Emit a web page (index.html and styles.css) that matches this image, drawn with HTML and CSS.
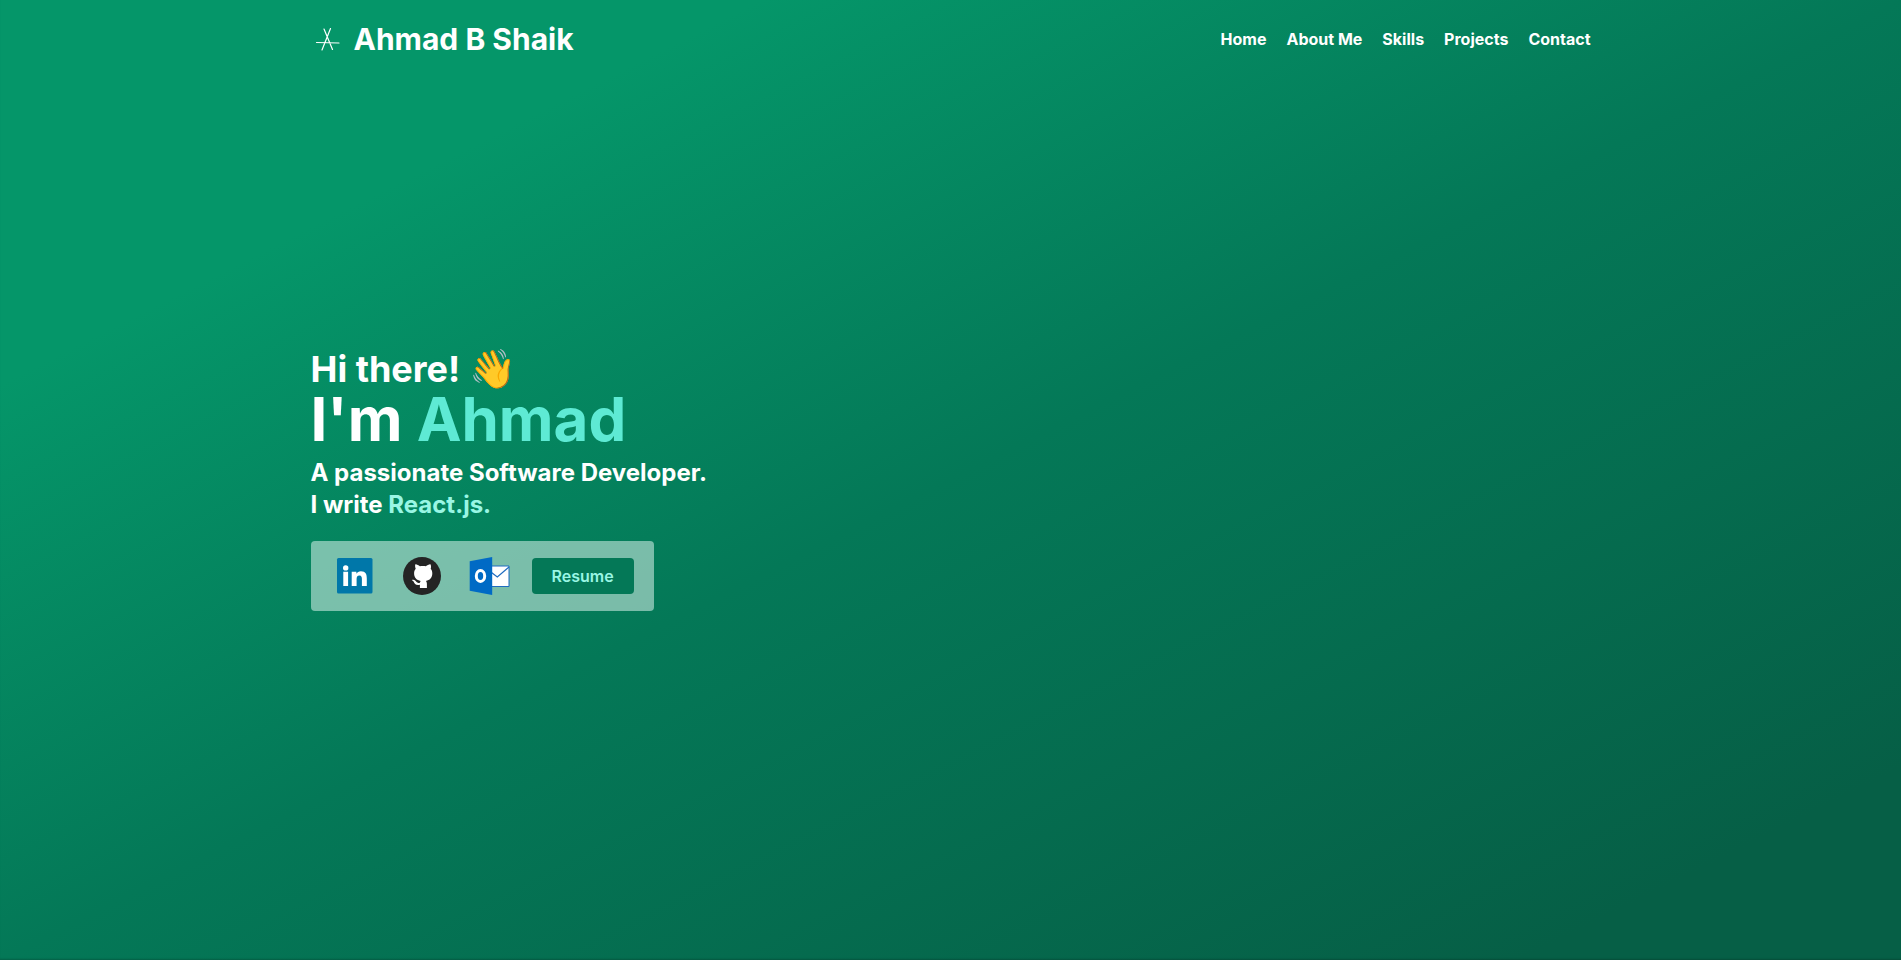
FILE: index.html
```
<!DOCTYPE html>
<html lang="en">
<head>
<meta charset="utf-8">
<meta name="viewport" content="width=device-width, initial-scale=1">
<title>Ahmad B Shaik</title>
<link rel="stylesheet" href="styles.css">
</head>
<body>
<header class="site-header">
  <div class="container header-row">
    <a class="brand" href="#home">
      <svg class="brand-mark" viewBox="0 0 32 32" fill="none" stroke="#fff" stroke-width="1.2" stroke-linecap="round" aria-hidden="true">
        <path d="M13 6 21.500 26.500M19.500 5.500 11 27M5.500 19.500 28 20"/>
      </svg>
      <span class="brand-name">Ahmad B Shaik</span>
    </a>
    <nav class="nav">
      <a href="#home">Home</a>
      <a href="#about">About Me</a>
      <a href="#skills">Skills</a>
      <a href="#projects">Projects</a>
      <a href="#contact">Contact</a>
    </nav>
  </div>
</header>
<main class="hero" id="home">
  <div class="container intro">
    <h2 class="greeting">Hi there! <span class="wave">👋</span></h2>
    <h1 class="name">I'm <span class="name-accent">Ahmad</span></h1>
    <p class="tagline">A passionate Software Developer.<br>I write <span class="tagline-accent">React.js.</span></p>
    <div class="links">
      <a class="social" href="#linkedin" aria-label="LinkedIn">
        <svg viewBox="1 1 46 46" aria-hidden="true">
          <rect x="6.500" y="6" width="35.500" height="35.500" rx="1.500" fill="#0077a9"/>
          <circle cx="15.200" cy="15.900" r="2.700" fill="#fff"/>
          <path fill="#fff" d="M12.800 19.800h4.800V34h-4.800zM21.200 19.800h4.700v1.900c.9-1.500 2.400-2.400 4.500-2.400 4.800 0 5.900 3 5.900 7.200V34h-4.900v-6.700c0-1.900-.3-3.700-2.500-3.700s-2.800 1.700-2.800 3.700V34h-4.900z"/>
        </svg>
      </a>
      <a class="social" href="#github" aria-label="GitHub">
        <svg viewBox="1 1 46 46" aria-hidden="true">
          <circle cx="24.500" cy="24" r="19" fill="#242424"/>
          <path fill="#fff" transform="translate(.4 0)" d="M17.500 12.300c.5-.5 3.200.7 4.500 1.900 1.500-.3 4.500-.3 6 0 1.300-1.200 4-2.400 4.500-1.900.8 1.200.8 3.200.3 4.500 1.100 1.200 1.600 2.700 1.600 4.500 0 4.700-2.500 7-6.400 7.600.7.800 1 1.700 1 3V36h-7v-3.200c-4.500.8-5.300-1.400-6.100-2.800-.5-.9-1.500-1.400-2-1.900 2.200-1 3.700.5 4.500 1.700.9 1.100 1.900 1.400 3.600.9.200-.7.400-1.300.8-1.800-3.900-.6-6.600-2.900-6.600-7.600 0-1.800.6-3.300 1.600-4.500-.5-1.300-.9-3.300-.3-4.500z"/>
        </svg>
      </a>
      <a class="social" href="#email" aria-label="Email">
        <svg viewBox="1 1 46 46" aria-hidden="true">
          <path fill="#fff" stroke="#1f6cc0" d="M27 14h17.500v20.500H27z"/>
          <path fill="none" stroke="#1f6cc0" stroke-width="1.200" d="m27 20.500 5.800 4.500L44.500 15"/>
          <path fill="#006ac5" d="M5.200 9.200 27.700 5v38L5.200 38.800z"/>
          <ellipse cx="16" cy="24" rx="4.200" ry="5.400" fill="none" stroke="#fff" stroke-width="3"/>
        </svg>
      </a>
      <a class="resume" href="#resume">Resume</a>
    </div>
  </div>
</main>
</body>
</html>
```

FILE: styles.css
```
* {
  box-sizing: border-box;
  margin: 0;
}

body {
  color: #fff;
  font-family: Inter, "Open Sans", sans-serif;
  font-weight: 700;
  font-size: 16px;
  line-height: 24px;
}

a {
  color: inherit;
  text-decoration: none;
}

.container {
  width: 100%;
  max-width: 1280px;
  margin: 0 auto;
}

.site-header {
  position: absolute;
  top: 0;
  left: 0;
  right: 0;
  padding: 20px 0;
}

.header-row,
.brand,
.nav,
.links {
  display: flex;
  align-items: center;
}

.header-row {
  justify-content: space-between;
}

.brand {
  gap: 11px;
}

.brand-mark {
  width: 32px;
  height: 32px;
}

.brand-name {
  font-size: 30px;
  line-height: 38px;
}

.nav {
  gap: 20px;
}

.hero {
  display: flex;
  align-items: center;
  min-height: 100vh;
  background: linear-gradient(to bottom right, #059669 20%, #047857 50%, #065f46 90%);
  box-shadow: inset 0 -2px 2px -1px rgba(0, 0, 0, 0.2);
}

.greeting {
  font-size: 36px;
  line-height: 40px;
}

.wave {
  font-size: 38px;
  line-height: 36px;
}

.name {
  font-size: 60px;
  line-height: 60px;
}

.name-accent {
  color: #5eead4;
}

.tagline {
  margin: 8px 0 20px;
  font-size: 24px;
  line-height: 32px;
}

.tagline-accent {
  color: #99f6e4;
}

.links {
  width: fit-content;
  gap: 20px;
  padding: 12px 20px;
  border-radius: 4px;
  background: rgba(240, 253, 250, 0.5);
}

.social,
.social svg {
  display: block;
  width: 47px;
  height: 46px;
}

.resume {
  padding: 6px 20px;
  border-radius: 4px;
  background: #047857;
  color: #99f6e4;
  font-weight: 600;
}
```
